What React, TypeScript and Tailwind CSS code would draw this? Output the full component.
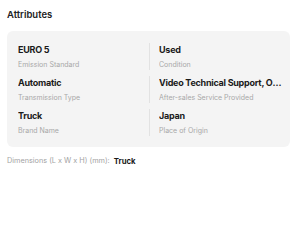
const attrs = [
  { value: 'EURO 5', label: 'Emission Standard' },
  { value: 'Used', label: 'Condition' },
  { value: 'Automatic', label: 'Transmission Type' },
  { value: 'Video Technical Support, Online Support', label: 'After-sales Service Provided' },
  { value: 'Truck', label: 'Brand Name' },
  { value: 'Japan', label: 'Place of Origin' },
]

export default function App() {
  return (
    <div className="w-[300px] h-[248px] bg-white pt-[8px] px-[7px]" style={{ fontFamily: 'Inter, "Noto Sans", sans-serif' }}>
      <h2 className="text-[9.5px] leading-[14px] font-semibold text-[#222]">Attributes</h2>

      <div className="mt-[9px] w-[283px] rounded-[6px] bg-[#f4f4f4] pl-[11px] pr-[8px] pt-[12px] pb-[11px] grid grid-cols-[131px_1fr] gap-y-[6px]">
        {attrs.map((a, i) => (
          <div
            key={a.label}
            className={i % 2 === 1 ? 'border-l border-[#e2e2e2] pl-[9px] min-w-0' : 'min-w-0'}
          >
            <p className="text-[9px] leading-[14px] font-bold tracking-[-0.25px] text-[#1a1a1a] truncate">{a.value}</p>
            <p className="mt-[3px] text-[7px] leading-[10px] text-[#a8a8a8] truncate">{a.label}</p>
          </div>
        ))}
      </div>

      <div className="mt-[8px] flex items-center gap-[4px] text-[7.3px] leading-[12px]">
        <span className="text-[#a3a3a3]">Dimensions (L x W x H) (mm):</span>
        <span className="text-[7.8px] font-bold text-[#1a1a1a]">Truck</span>
      </div>
    </div>
  )
}
